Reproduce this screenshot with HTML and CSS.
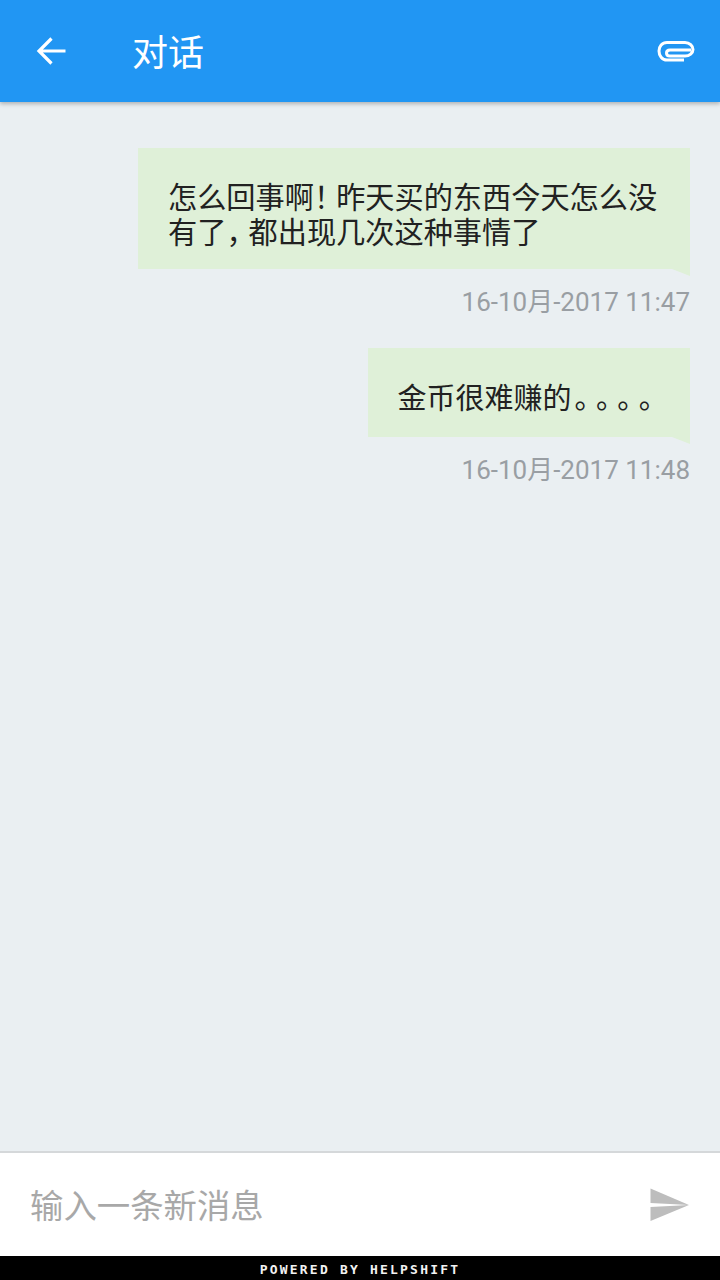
FILE: index.html
```html
<!DOCTYPE html>
<html lang="zh">
<head>
  <meta charset="UTF-8">
  <title>对话</title>
  <link rel="stylesheet" href="styles.css">
</head>
<body>
  <div class="app">
    <header class="toolbar">
      <svg class="back_icon" width="30" height="30" viewBox="0 0 30 30">
        <path d="M29.500 15H3.500M15.500 2.500L3 15L15.500 27.500" fill="none" stroke="#fff" stroke-width="3.200"/>
      </svg>
      <h1 class="title">对话</h1>
      <svg class="clip_icon" width="38" height="24" viewBox="0 0 38 24">
        <path d="M27 21H10C5 21 2 16.500 2 12S5 3.500 10 3.500H28C32.500 3.500 36 7 36 10.500S32.500 17 28 17H13C10.500 17 9.500 15.500 9.500 14S10.500 11 13 11H34" fill="none" stroke="#fff" stroke-width="3"/>
      </svg>
    </header>

    <main class="messages">
      <div class="msg">
        <div class="bubble bubble_long">
          <div class="line">怎么回事啊<span class="punct">！</span>昨天买的东西今天怎么没</div>
          <div class="line">有了<span class="punct">，</span>都出现几次这种事情了</div>
        </div>
        <div class="stamp">16-10月-2017 11:47</div>
      </div>
      <div class="msg">
        <div class="bubble bubble_short">
          <div class="line">金币很难赚的<span class="punct dots">。。。。</span></div>
        </div>
        <div class="stamp">16-10月-2017 11:48</div>
      </div>
    </main>

    <footer class="composer">
      <div class="placeholder">输入一条新消息</div>
      <svg class="send_icon" width="40" height="34" viewBox="0 0 40 34">
        <path d="M0.500 0.500L39 17L0.500 15Z M0.500 19L39 17L0.500 33Z" fill="#bdbdbd"/>
      </svg>
    </footer>
    <div class="powered">POWERED BY HELPSHIFT</div>
  </div>
</body>
</html>
```

FILE: styles.css
```css
html, body {
  height: 100%;
  margin: 0;
}

body {
  font-family: "Roboto", "Noto Sans CJK SC", sans-serif;
  background: #eaeff2;
  text-spacing-trim: space-all;
}

.app {
  height: 1280px;
  display: flex;
  flex-direction: column;
}

.toolbar {
  height: 102px;
  flex-shrink: 0;
  display: flex;
  align-items: center;
  background: #2196f3;
  box-shadow: 0 2px 4px rgba(0, 0, 0, 0.25);
  position: relative;
  padding: 0 25px 0 36px;
}

.back_icon {
  flex-shrink: 0;
}

.title {
  margin: 0 0 0 66px;
  padding-top: 6px;
  flex: 1;
  color: #fff;
  font-size: 36px;
  font-weight: 400;
  line-height: 102px;
}

.messages {
  flex: 1;
  padding: 46px 30px 0;
  display: flex;
  flex-direction: column;
  gap: 30px;
}

.msg {
  display: flex;
  flex-direction: column;
  align-items: flex-end;
}

.bubble {
  position: relative;
  background: #dff0d8;
  color: #212121;
  line-height: 35px;
}

.bubble_long {
  width: 492px;
  padding: 33px 30px 18px;
  font-size: 29.200px;
}

.bubble_short {
  padding: 34px 30px 20px;
  font-size: 29px;
}

.bubble::after {
  content: "";
  position: absolute;
  right: 0;
  bottom: -7px;
  border-top: 7px solid #dff0d8;
  border-left: 18px solid transparent;
}

.line {
  white-space: nowrap;
}

.punct {
  font-feature-settings: "halt";
  letter-spacing: 7.600px;
}

.dots {
  margin-left: 3px;
  letter-spacing: 6.850px;
}

.stamp {
  margin-top: 17px;
  color: #999ea3;
  font-size: 26px;
  line-height: 32px;
}

.composer {
  height: 103px;
  flex-shrink: 0;
  display: flex;
  align-items: center;
  justify-content: space-between;
  padding: 0 30px;
  background: #fff;
  border-top: 2px solid #d5d8da;
}

.placeholder {
  color: #a8a8a8;
  font-size: 33.400px;
  padding-bottom: 2px;
}

.send_icon {
  flex-shrink: 0;
}

.powered {
  height: 24px;
  flex-shrink: 0;
  background: #000;
  color: #f2f2f2;
  font-family: "DejaVu Sans Mono", monospace;
  font-size: 13px;
  font-weight: 700;
  letter-spacing: 2.200px;
  line-height: 28px;
  text-align: center;
}
```
